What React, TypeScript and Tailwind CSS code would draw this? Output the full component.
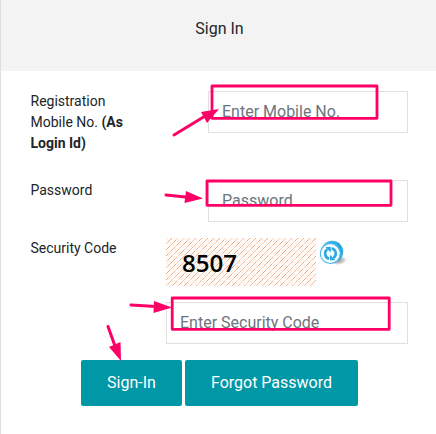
import React from "react";

const field =
  "block h-[42px] rounded-none border border-[#e0e0e0] bg-white pb-[2px] pl-[13px] text-[16px] text-[#6c757d] placeholder:text-[#6c757d] placeholder:opacity-100 outline-none";

function Arrow({ x1, y1, bx, by, head }: { x1: number; y1: number; bx: number; by: number; head: string }) {
  return (
    <g>
      <line x1={x1} y1={y1} x2={bx} y2={by} stroke="#ff0066" strokeWidth="3" strokeLinecap="round" />
      <polygon points={head} fill="#ff0066" />
    </g>
  );
}

function RefreshIcon() {
  return (
    <svg width="28" height="28" viewBox="0 0 28 28" aria-label="Refresh">
      <defs>
        <radialGradient id="shade">
          <stop offset="0" stopColor="#666" stopOpacity="0.85" />
          <stop offset="0.6" stopColor="#888" stopOpacity="0.5" />
          <stop offset="1" stopColor="#999" stopOpacity="0" />
        </radialGradient>
        <linearGradient id="rim" x1="0" y1="0" x2="1" y2="1">
          <stop offset="0" stopColor="#5fc3ee" />
          <stop offset="0.5" stopColor="#22a7e0" />
          <stop offset="1" stopColor="#36b0e4" />
        </linearGradient>
      </defs>
      <ellipse cx="17" cy="20" rx="10" ry="5" fill="url(#shade)" />
      <circle cx="12.2" cy="11.8" r="11" fill="url(#rim)" />
      <circle cx="10.4" cy="13.4" r="10.6" fill="#45b5e6" />
      <circle cx="10.3" cy="13.6" r="9.5" fill="#f5fcff" />
      <g fill="none" stroke="#2ba8df" strokeWidth="2.5">
        <path d="M9.2 18.8C4.6 18 3.8 11.4 7.4 9.2" />
        <path d="M11.6 8.4C16.6 9.2 17 15.6 13.4 18" />
      </g>
      <path d="M5.4 7h5.4v5.4zM15.4 20.2H10v-5.4z" fill="#2ba8df" />
    </svg>
  );
}

// Pixel tones picked in turn along each diagonal of the captcha hatch.
const tones = ["#f3b48c", "#f8cdb2", "#e9a679", "#f6c4bb", "#f0ae97", "#e3bb93", "#f9d3bd"];
const hatch: { x: number; y: number; fill: string }[] = [];
for (let y = 0; y < 24; y++) {
  for (let x = 0; x < 48; x++) {
    const d = (x + y) % 6;
    if (d === 5) hatch.push({ x, y, fill: tones[(x * 5 + y * 3 + ((x * y) % 4)) % 7] });
    else if (d === 2 && (x * 7 + y * 3) % 5 < 2) hatch.push({ x, y, fill: "#fbe6da" });
  }
}

function Captcha() {
  return (
    <svg width="150" height="48">
      <defs>
        <pattern id="hatch" width="48" height="24" patternUnits="userSpaceOnUse">
          {hatch.map((p) => (
            <rect key={`${p.x}-${p.y}`} x={p.x} y={p.y} width="1" height="1" fill={p.fill} />
          ))}
        </pattern>
      </defs>
      <rect width="150" height="48" fill="#fffcfa" />
      <rect width="150" height="48" fill="url(#hatch)" />
      <text x="16" y="34" fontFamily="Open Sans, sans-serif" fontSize="24" fontWeight="600" fill="#000" textLength="55" lengthAdjust="spacingAndGlyphs">8507</text>
    </svg>
  );
}

export default function App() {
  return (
    <main className="relative h-[434px] w-[436px] overflow-hidden border-l border-[#dedede] bg-white font-['Roboto',sans-serif] text-[#212529]">
      <header className="flex h-[71px] items-start justify-center bg-[#f3f3f3] pt-[17px] text-[16px] leading-6">
        <h1 className="ml-0.5">Sign In</h1>
      </header>
      <form className="pl-[29px] pr-[28px] pt-5">
        <div className="flex h-[89px] justify-between">
          <label className="ml-[0.5px] w-[110px] text-[14px] leading-[21px]">
            Registration Mobile No. <b className="font-bold">(As Login Id)</b>
          </label>
          <input className={`${field} w-[200px]`} placeholder="Enter Mobile No." />
        </div>
        <div className="flex h-[58px] justify-between">
          <label className="ml-[0.5px] text-[14px] leading-[21px]">Password</label>
          <input className={`${field} w-[200px]`} type="password" placeholder="Password" />
        </div>
        <div className="flex h-[122px]">
          <label className="w-[136px] shrink-0 pl-[0.5px] text-[14px] leading-[21px]">Security Code</label>
          <div>
            <div className="flex h-16 items-start gap-1">
              <Captcha />
              <button type="button" className="mt-0.5"><RefreshIcon /></button>
            </div>
            <input className={`${field} w-[242px]`} placeholder="Enter Security Code" />
          </div>
        </div>
        <div className="ml-[51px] flex gap-[3px] text-[16px] text-white">
          <button type="button" className="h-[46px] w-[101px] rounded-[2px] bg-[#0097a7] pb-px">Sign-In</button>
          <button type="button" className="h-[46px] w-[173px] rounded-[2px] bg-[#0097a7] pb-px">Forgot Password</button>
        </div>
      </form>
      <svg className="pointer-events-none absolute top-0 -left-px" width="436" height="434">
        <g fill="none" stroke="#ff0066" strokeWidth="2.8" strokeLinejoin="round">
          <rect x="212" y="86" width="165" height="32.3" />
          <rect x="207" y="181" width="184" height="24.3" />
          <rect x="172.2" y="298" width="217" height="31.3" />
        </g>
        <Arrow x1={174} y1={135} bx={206} by={115.5} head="219,109 201,112 207,123" />
        <Arrow x1={166} y1={195} bx={188} by={197.3} head="203,198.5 186,191 184.5,203" />
        <Arrow x1={131} y1={305} bx={156} by={306.5} head="172,307.5 154,301 153.5,313" />
        <Arrow x1={108} y1={326.5} bx={115} by={346} head="121,361 120.5,342 109,347" />
      </svg>
    </main>
  );
}
